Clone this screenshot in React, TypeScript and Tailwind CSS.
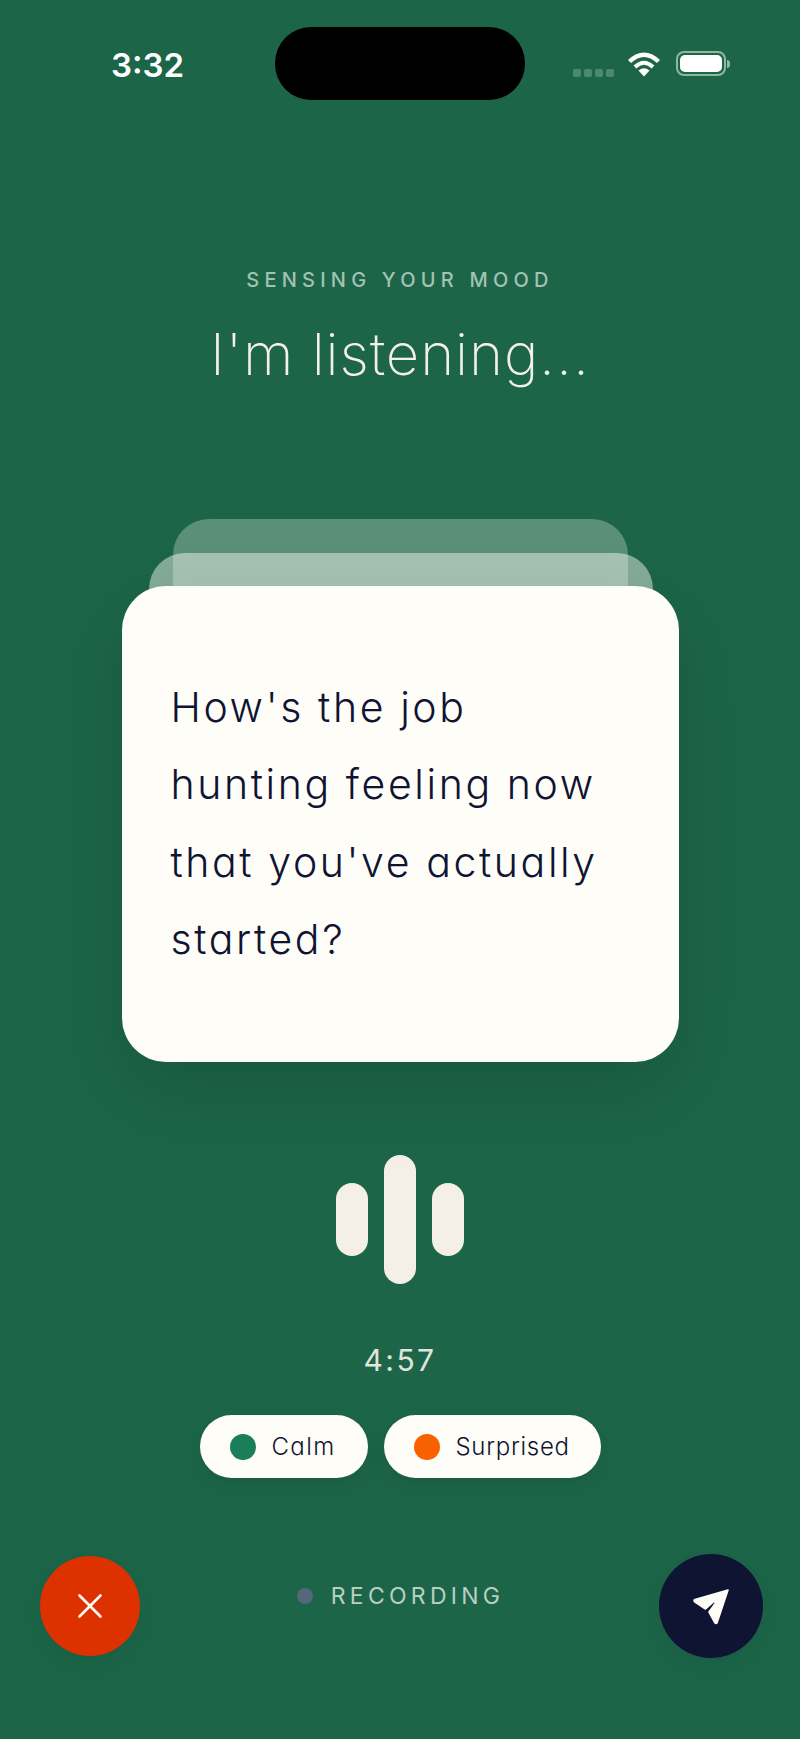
import React from "react";

export default function App() {
  return (
    <div className="w-[800px] h-[1739px] overflow-hidden bg-[#1c6548] flex flex-col items-center font-['Inter',sans-serif] [font-feature-settings:'cv11']">
      <div className="w-full h-[100px] pt-[27px] pl-[111px] pr-[70px] flex items-start">
        <span className="mt-[18px] w-[164px] shrink-0 text-[33px] leading-[40px] font-semibold text-white">3:32</span>
        <div className="w-[250px] h-[73px] shrink-0 rounded-[36px] bg-black" />
        <div className="flex-1 h-[40px] mt-[25px] flex items-start justify-end">
          <div className="flex gap-[3px] mt-[17px] mr-[13px]">
            <div className="w-[8px] h-[8px] rounded-[2px] bg-[#4c8a70]" />
            <div className="w-[8px] h-[8px] rounded-[2px] bg-[#4c8a70]" />
            <div className="w-[8px] h-[8px] rounded-[2px] bg-[#4c8a70]" />
            <div className="w-[8px] h-[8px] rounded-[2px] bg-[#4c8a70]" />
          </div>
          <svg width="34" height="26" viewBox="0 0 34 26" className="mt-[-1px] mr-[15px]">
            <path d="M17 25.5 L11.5 19.5 Q17 15 22.5 19.5 Z" fill="#fff" />
            <path d="M2.5 10.5 Q17 -3 31.5 10.5" fill="none" stroke="#fff" strokeWidth="4.4" />
            <path d="M8 16 Q17 7.5 26 16" fill="none" stroke="#fff" strokeWidth="4" />
          </svg>
          <div className="flex items-center mt-[-1px]">
            <div className="w-[50px] h-[25px] rounded-[8px] border-2 border-[#8fb5a4] p-[2px]">
              <div className="w-full h-full rounded-[5px] bg-white" />
            </div>
            <div className="w-[3px] h-[8px] ml-[1px] rounded-r-[3px] bg-[#8fb5a4]" />
          </div>
        </div>
      </div>

      <div className="mt-[168px] text-[20px] leading-[24px] tracking-[0.26em] font-medium text-[#a2c2b2]">SENSING YOUR MOOD</div>
      <h1 className="mt-[27px] text-[58px] leading-[70px] tracking-[0.9px] font-extralight text-[#f4f0e8]">I'm listening...</h1>

      <div className="relative mt-[197px] w-[557px] shrink-0">
        <div className="absolute -top-[67px] left-[51px] right-[51px] h-[100px] rounded-t-[36px] bg-[#5a9078]" />
        <div className="absolute -top-[33px] left-[27px] right-[26px] h-[70px] rounded-t-[36px] bg-[#fffdf7]/[0.46]" />
        <div className="relative h-[476px] rounded-[44px] bg-[#fffdf7] shadow-[0_30px_80px_rgba(0,0,0,0.13)] pl-[49px] pt-[83px]">
          <p className="text-[41px] leading-[77.3px] tracking-[2.6px] font-light text-[#0f1433]">
            How's the job<br />hunting feeling now<br />that you've actually<br />started?
          </p>
        </div>
      </div>

      <div className="mt-[93px] flex items-center gap-[16px]">
        <div className="w-[32px] h-[73px] rounded-full bg-[#f4f0e8]" />
        <div className="w-[32px] h-[129px] rounded-full bg-[#f4f0e8]" />
        <div className="w-[32px] h-[73px] rounded-full bg-[#f4f0e8]" />
      </div>

      <div className="mt-[58px] text-[30px] leading-[36px] tracking-[0.08em] text-[#e1e6dd]">4:57</div>

      <div className="mt-[37px] flex gap-[16px]">
        <div className="h-[63px] w-[168px] rounded-full bg-[#fffdf7] flex items-center pl-[30px] gap-[16px] shadow-[0_8px_20px_rgba(0,0,0,0.08)]">
          <div className="w-[26px] h-[26px] rounded-full bg-[#1c7d5a]" />
          <span className="text-[24px] tracking-[1.4px] font-light text-[#0f1433]">Calm</span>
        </div>
        <div className="h-[63px] w-[217px] rounded-full bg-[#fffdf7] flex items-center pl-[30px] gap-[16px] shadow-[0_8px_20px_rgba(0,0,0,0.08)]">
          <div className="w-[26px] h-[26px] rounded-full bg-[#f96000]" />
          <span className="text-[24px] tracking-[0.7px] font-light text-[#0f1433]">Surprised</span>
        </div>
      </div>

      <div className="mt-[76px] w-full pl-[40px] pr-[37px] flex items-center justify-between">
        <button className="w-[100px] h-[100px] rounded-full bg-[#dd3100] flex items-center justify-center shadow-[0_8px_24px_rgba(0,0,0,0.08)]">
          <svg width="26" height="26" viewBox="0 0 26 26"><path d="M2.5 2.5 L23.5 23.5 M23.5 2.5 L2.5 23.5" stroke="#fff" strokeWidth="2.6" strokeLinecap="round" /></svg>
        </button>
        <div className="flex items-center gap-[18px] mb-[20px] ml-[2px]">
          <div className="w-[16px] h-[16px] rounded-full bg-[#55677a]" />
          <span className="text-[23px] leading-[26px] tracking-[0.185em] text-[#b9cfc2]">RECORDING</span>
        </div>
        <button className="w-[104px] h-[104px] rounded-full bg-[#0f1433] flex items-center justify-center shadow-[0_8px_24px_rgba(0,0,0,0.08)]">
          <svg width="80" height="80" viewBox="0 0 80 80">
            <path d="M57 24 L24 33.5 Q22 34.5 24 36 L34.5 43 L43 35.5 L44.5 37 L38 46 L44 57 Q45 58 46 57 Z" fill="#fffdf7" stroke="#fffdf7" strokeWidth="1.6" strokeLinejoin="round" />
          </svg>
        </button>
      </div>
    </div>
  );
}
